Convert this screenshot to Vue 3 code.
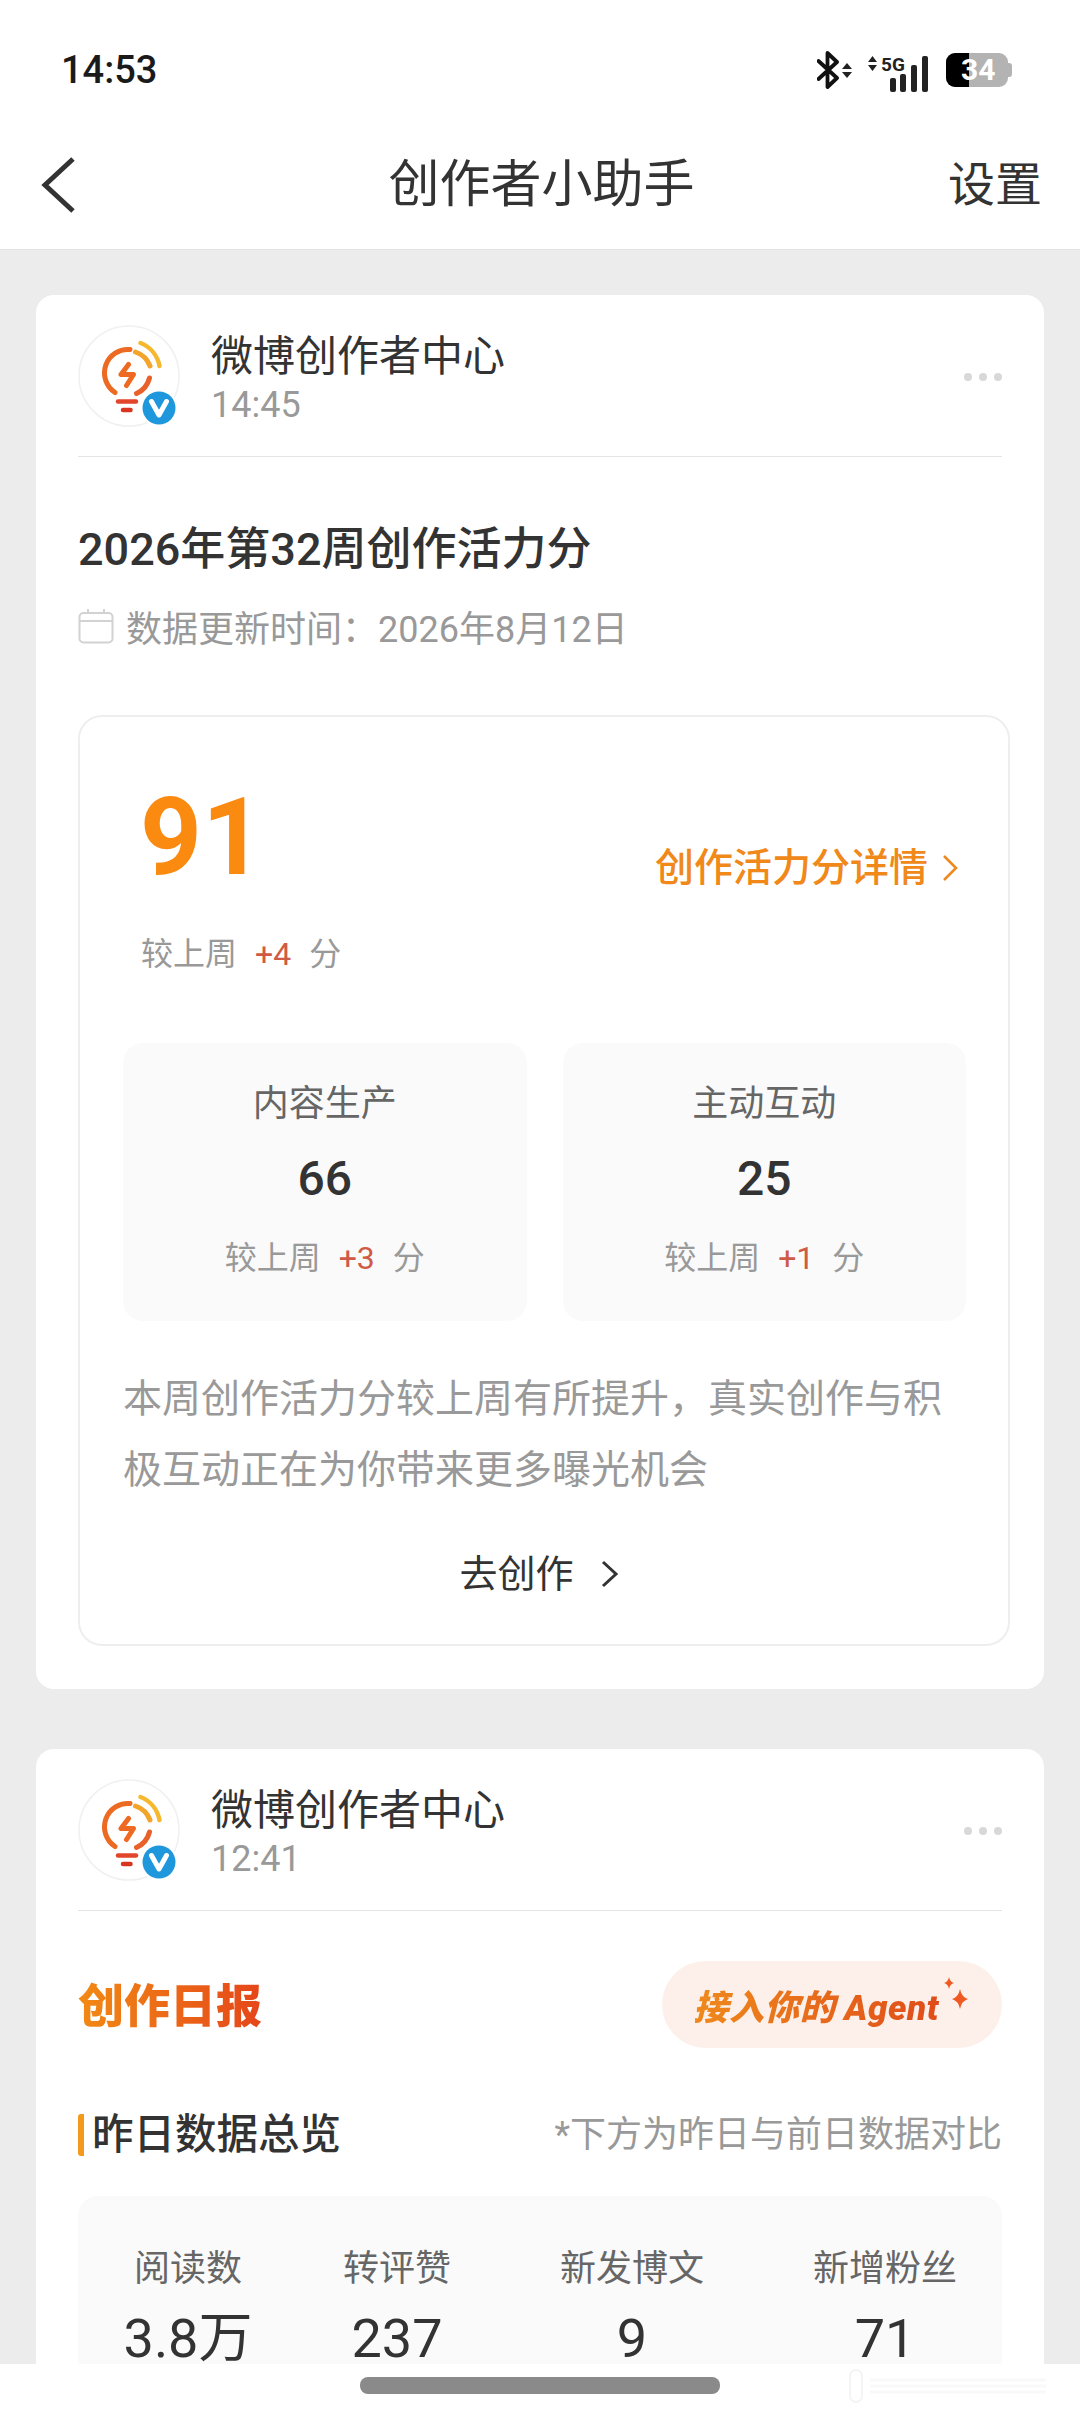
<template>
  <div class="page">
    <svg class="defs" width="0" height="0">
      <defs>
        <symbol id="bulb" viewBox="0 0 102 102">
          <circle cx="51" cy="51" r="50" fill="#fff" stroke="#f0f0f0" stroke-width="1.5" />
          <path d="M52 24.5A23.5 23.5 0 0 0 37 67.5" fill="none" stroke="#ec6a22" stroke-width="5" stroke-linecap="round" />
          <path d="M58.5 68.5A23.5 23.5 0 0 0 71.5 53" fill="none" stroke="#e8612a" stroke-width="5" stroke-linecap="round" />
          <path d="M57.5 27A23.5 23.5 0 0 1 72 41" fill="none" stroke="#f3a42a" stroke-width="5" stroke-linecap="round" />
          <path d="M62.5 18A31 31 0 0 1 81.5 41" fill="none" stroke="#f5b82e" stroke-width="4.5" stroke-linecap="round" />
          <path d="M50.5 39.5L43 49.5H55.5L48.5 60.5" fill="none" stroke="#ee6a22" stroke-width="5" stroke-linecap="round" stroke-linejoin="round" />
          <path d="M40 76.5H58" stroke="#e2452a" stroke-width="4.5" stroke-linecap="round" />
          <path d="M45 85H52.5" stroke="#d8341f" stroke-width="4.5" stroke-linecap="round" />
          <circle cx="81" cy="83" r="18.5" fill="#fff" />
          <circle cx="81" cy="83" r="16.5" fill="#1f97dd" />
          <path d="M73.5 76.5L81 90L88.5 76.5" fill="none" stroke="#fff" stroke-width="5" stroke-linejoin="round" stroke-linecap="round" />
        </symbol>
      </defs>
    </svg>

    <div class="status-bar">
      <span class="clock">14:53</span>
      <div class="status-icons">
        <svg class="bt" width="36" height="38" viewBox="0 0 36 38">
          <path d="M1.500 10L20 27L10.500 36V2L20 11L1.500 28" fill="none" stroke="#111" stroke-width="3.800" stroke-linecap="round" stroke-linejoin="round" />
          <path d="M25 18L30 12L35 18ZM25 21L30 27L35 21Z" fill="#222" />
        </svg>
        <svg class="signal" width="62" height="46" viewBox="0 -8 62 46">
          <path d="M0 7L4.500 1L9 7ZM0 10L4.500 16L9 10Z" fill="#222" />
          <text x="13" y="15.500" class="five-g">5G</text>
          <rect x="22" y="23" width="6" height="14" rx="2" fill="#222" />
          <rect x="32" y="19" width="6" height="18" rx="2" fill="#222" />
          <rect x="43" y="10" width="6" height="27" rx="2" fill="#222" />
          <rect x="54" y="1" width="6" height="36" rx="2" fill="#222" />
        </svg>
        <div class="battery">
          <span class="battery-fill"></span>
          <span class="battery-num">34</span>
          <span class="battery-nub"></span>
        </div>
      </div>
    </div>

    <header class="nav">
      <svg class="back" width="34" height="56" viewBox="0 0 34 56">
        <path d="M32 2L4 28L32 54" fill="none" stroke="#333" stroke-width="5" />
      </svg>
      <div class="nav-title">创作者小助手</div>
      <div class="nav-action">设置</div>
    </header>

    <main class="feed">
      <section class="card">
        <div class="sender">
          <svg class="avatar"><use href="#bulb" /></svg>
          <div class="sender-text">
            <div class="sender-name">微博创作者中心</div>
            <div class="sender-time">14:45</div>
          </div>
          <div class="more"><i></i><i></i><i></i></div>
        </div>

        <h2 class="report-title">2026年第32周创作活力分</h2>
        <div class="report-date">
          <svg width="36" height="36" viewBox="0 0 36 36">
            <rect x="1.500" y="5" width="33" height="29.500" rx="4" fill="none" stroke="#d2d2d2" stroke-width="2" />
            <path d="M1.500 13H34.500M10 1V6M26 1V6" stroke="#d2d2d2" stroke-width="2" />
          </svg>
          <span>数据更新时间&#xFF1A;2026年8月12日</span>
        </div>

        <div class="score-box">
          <div class="score-row">
            <div class="score">91</div>
            <div class="score-link">
              创作活力分详情
              <svg width="16" height="28" viewBox="0 0 16 28">
                <path d="M2 2L14 14L2 26" fill="none" stroke="#f0881a" stroke-width="2.500" />
              </svg>
            </div>
          </div>
          <div class="delta delta-main">较上周<b>+4</b>分</div>

          <div class="sub-grid">
            <div v-for="s in subs" :key="s.name" class="sub">
              <div class="sub-name">{{ s.name }}</div>
              <div class="sub-value">{{ s.value }}</div>
              <div class="delta">较上周<b>{{ s.delta }}</b>分</div>
            </div>
          </div>

          <p class="summary">本周创作活力分较上周有所提升&#xFF0C;真实创作与积极互动正在为你带来更多曝光机会</p>

          <div class="cta">
            去创作
            <svg width="20" height="30" viewBox="0 0 20 30">
              <path d="M3 3L16 15L3 27" fill="none" stroke="#333" stroke-width="3" />
            </svg>
          </div>
        </div>
      </section>

      <section class="card">
        <div class="sender">
          <svg class="avatar"><use href="#bulb" /></svg>
          <div class="sender-text">
            <div class="sender-name">微博创作者中心</div>
            <div class="sender-time">12:41</div>
          </div>
          <div class="more"><i></i><i></i><i></i></div>
        </div>

        <div class="daily-head">
          <div class="daily-title">创作日报</div>
          <div class="agent-pill">
            <span class="agent-text">接入你的 Agent</span>
            <svg class="sparkle" width="30" height="42" viewBox="0 0 30 42">
              <path d="M8 0Q9 5 13 6Q9 7 8 12Q7 7 3 6Q7 5 8 0Z" fill="#ee5a22" />
              <path d="M19 12Q20.500 20 27 22Q20.500 24 19 32Q17.500 24 11 22Q17.500 20 19 12Z" fill="#ee5a22" />
            </svg>
          </div>
        </div>

        <div class="section-head">
          <div class="section-title">昨日数据总览</div>
          <div class="section-note">*下方为昨日与前日数据对比</div>
        </div>

        <div class="stats">
          <div v-for="s in stats" :key="s.label" class="stat">
            <div class="stat-label">{{ s.label }}</div>
            <div class="stat-value">{{ s.value }}</div>
          </div>
        </div>
      </section>
    </main>

    <div class="home-bar">
      <svg class="ghost" width="230" height="36" viewBox="0 0 230 36">
        <rect x="30" y="2" width="12" height="32" rx="6" fill="none" stroke="#f4f4f4" stroke-width="2" />
        <path d="M50 12H226M50 18H226M50 24H226" stroke="#f9f9f9" stroke-width="3" />
      </svg>
      <span class="pill"></span>
    </div>
  </div>
</template>

<script setup>
const subs = [
  { name: '内容生产', value: 66, delta: '+3' },
  { name: '主动互动', value: 25, delta: '+1' }
]

const stats = [
  { label: '阅读数', value: '3.8万' },
  { label: '转评赞', value: '237' },
  { label: '新发博文', value: '9' },
  { label: '新增粉丝', value: '71' }
]
</script>

<style>
body {
  background: #ececec;
}
</style>

<style scoped>
.page {
  position: relative;
  width: 1080px;
  height: 2412px;
  overflow: hidden;
  background: #ececec;
  font-family: Roboto, "Noto Sans CJK SC", sans-serif;
  color: #333;
}

.defs {
  position: absolute;
}

.status-bar {
  display: flex;
  justify-content: space-between;
  align-items: center;
  height: 60px;
  padding: 40px 72px 0 61px;
  background: #fff;
}

.clock {
  font-size: 38px;
  font-weight: 500;
  color: #1a1a1a;
}

.status-icons {
  display: flex;
  align-items: center;
}

.bt {
  margin-right: 15px;
}

.signal {
  margin-right: 16px;
}

.five-g {
  font-family: Roboto, sans-serif;
  font-size: 19px;
  font-weight: 700;
  fill: #222;
}

.battery {
  position: relative;
  width: 62px;
  height: 34px;
  border-radius: 9px;
  background: #b3b3b3;
}

.battery-fill {
  position: absolute;
  left: 0;
  top: 0;
  bottom: 0;
  width: 23px;
  background: #000;
  border-radius: 9px 0 0 9px;
}

.battery-num {
  position: absolute;
  left: 15px;
  top: 0;
  font-size: 30px;
  line-height: 34px;
  font-weight: 700;
  color: #fff;
}

.battery-nub {
  position: absolute;
  right: -4px;
  top: 10px;
  width: 4px;
  height: 14px;
  border-radius: 0 3px 3px 0;
  background: #b3b3b3;
}

.nav {
  display: grid;
  grid-template-columns: 1fr auto 1fr;
  align-items: center;
  height: 129px;
  padding: 20px 38px 0 41px;
  background: #fff;
  border-bottom: 1px solid #e2e2e2;
}

.nav-title {
  font-size: 51px;
  line-height: 70px;
  color: #333;
}

.nav-action {
  justify-self: end;
  font-size: 47px;
  line-height: 70px;
  color: #333;
}

.feed {
  padding: 45px 36px 0;
  display: flex;
  flex-direction: column;
  gap: 60px;
}

.card {
  padding: 30px 42px 43px;
  background: #fff;
  border-radius: 18px;
}

.sender {
  display: flex;
  align-items: flex-start;
  padding-bottom: 29px;
  border-bottom: 1px solid #e4e4e4;
}

.avatar {
  flex: none;
  width: 102px;
  height: 102px;
}

.sender-text {
  flex: 1;
  margin-left: 31px;
}

.sender-name {
  font-size: 42px;
  line-height: 56px;
  margin-top: 4px;
  color: #333;
}

.sender-time {
  font-size: 36px;
  line-height: 42px;
  margin-top: -1px;
  color: #999;
}

.more {
  display: flex;
  gap: 7px;
  margin-top: 48px;
}

.more i {
  width: 8px;
  height: 8px;
  border-radius: 50%;
  background: #d8d8d8;
}

.report-title {
  margin: 63px 0 0;
  font-size: 45px;
  line-height: 60px;
  font-weight: 500;
  color: #333;
}

.report-date {
  display: flex;
  align-items: center;
  gap: 12px;
  height: 50px;
  margin-top: 21px;
  font-size: 36px;
  color: #999;
}

.score-box {
  box-sizing: border-box;
  width: 932px;
  margin-top: 64px;
  padding: 60px 42px 45px 43px;
  border: 2px solid #eee;
  border-radius: 24px;
}

.score-row {
  display: flex;
  justify-content: space-between;
  align-items: flex-end;
  padding: 0 8px 0 17px;
}

.score {
  font-size: 108px;
  line-height: 120px;
  font-weight: 700;
  color: #fb8a10;
}

.score-link {
  display: flex;
  align-items: center;
  gap: 14px;
  margin-bottom: 4px;
  font-size: 39px;
  line-height: 50px;
  font-weight: 500;
  color: #f0881a;
}

.delta {
  font-size: 32px;
  line-height: 44px;
  color: #999;
}

.delta b {
  margin: 0 18px;
  font-weight: 400;
  color: #cf5a45;
}

.delta-main {
  margin: 35px 0 0 18px;
}

.sub-grid {
  display: grid;
  grid-template-columns: 1fr 1fr;
  gap: 36px;
  margin-top: 67px;
}

.sub {
  height: 278px;
  padding-top: 36px;
  box-sizing: border-box;
  text-align: center;
  background: #fafafa;
  border-radius: 20px;
}

.sub-name {
  font-size: 36px;
  line-height: 50px;
  color: #666;
}

.sub-value {
  margin: 20px 0 27px;
  font-size: 48px;
  line-height: 60px;
  font-weight: 500;
  color: #333;
}

.summary {
  margin: 43px 0 0;
  font-size: 39px;
  line-height: 71px;
  color: #999;
}

.cta {
  display: flex;
  justify-content: center;
  align-items: center;
  gap: 26px;
  margin-top: 43px;
  padding-right: 10px;
  font-size: 38px;
  line-height: 50px;
  color: #333;
}

.daily-head {
  display: flex;
  justify-content: space-between;
  align-items: center;
  margin-top: 50px;
}

.daily-title {
  margin-bottom: 6px;
  font-size: 46px;
  font-weight: 900;
  background: linear-gradient(90deg, #f28a14, #e5461a);
  -webkit-background-clip: text;
  background-clip: text;
  color: transparent;
}

.agent-pill {
  display: flex;
  align-items: center;
  justify-content: center;
  gap: 2px;
  width: 340px;
  height: 87px;
  border-radius: 44px;
  background: #fdf0ea;
}

.agent-text {
  font-size: 35px;
  letter-spacing: 0.5px;
  font-weight: 900;
  font-style: italic;
  white-space: nowrap;
  background: linear-gradient(90deg, #ef8a1c, #df4c1a);
  -webkit-background-clip: text;
  background-clip: text;
  color: transparent;
}

.sparkle {
  margin-top: -14px;
}

.section-head {
  display: flex;
  justify-content: space-between;
  align-items: center;
  margin-top: 59px;
}

.section-title {
  padding-left: 8px;
  border-left: 6px solid #f39a1e;
  font-size: 41.5px;
  line-height: 42px;
  font-weight: 500;
  color: #333;
  border-radius: 3px;
}

.section-note {
  font-size: 36px;
  line-height: 56px;
  color: #999;
}

.stats {
  display: grid;
  grid-template-columns: 220px 198px 272px 234px;
  margin-top: 33px;
  padding: 48px 0 60px;
  background: #fafafa;
  border-radius: 20px;
}

.stat {
  text-align: center;
}

.stat-label {
  font-size: 36px;
  line-height: 50px;
  color: #666;
}

.stat-value {
  margin-top: 10px;
  font-size: 54px;
  line-height: 70px;
  color: #333;
}

.home-bar {
  position: absolute;
  left: 0;
  right: 0;
  bottom: 0;
  height: 48px;
  background: #fff;
}

.pill {
  position: absolute;
  left: 360px;
  top: 13px;
  width: 360px;
  height: 17px;
  border-radius: 8px;
  background: #8a8a8a;
}

.ghost {
  position: absolute;
  left: 820px;
  top: 4px;
}
</style>
